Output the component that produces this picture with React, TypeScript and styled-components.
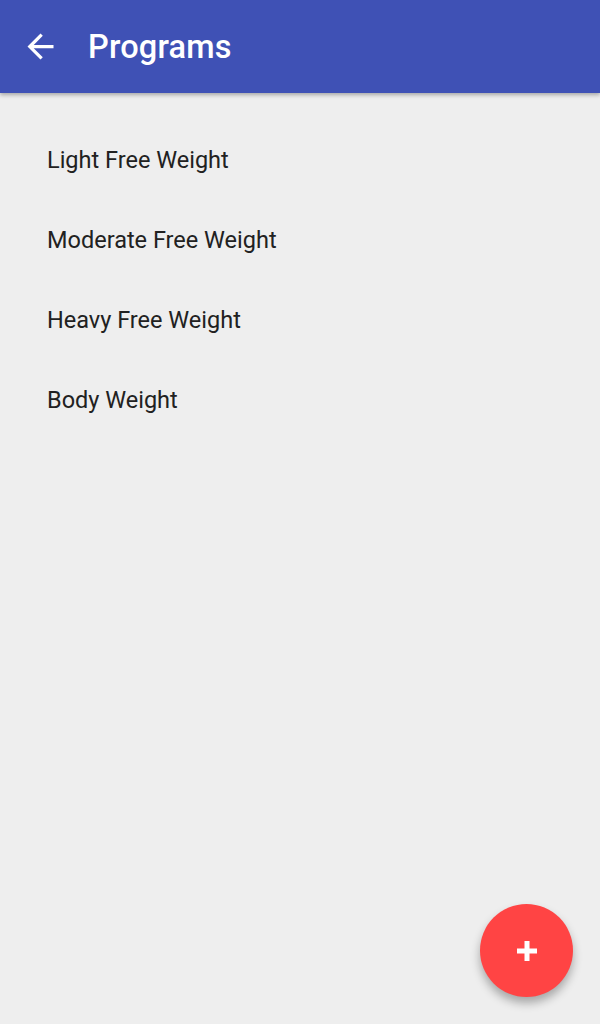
import React from "react";
import styled, { createGlobalStyle } from "styled-components";

const Global = createGlobalStyle`
  html, body { margin: 0; padding: 0; }
  body { background: #eeeeee; font-family: Roboto, "Noto Sans", sans-serif; }
`;

const Screen = styled.div`
  width: 600px;
  height: 1024px;
  background: #eeeeee;
  position: relative;
  overflow: hidden;
  display: flex;
  flex-direction: column;
`;

const AppBar = styled.header`
  height: 93px;
  background: #3f51b5;
  display: flex;
  align-items: center;
  padding-left: 20px;
  box-shadow: 0 2px 4px rgba(0, 0, 0, 0.3);
  position: relative;
  z-index: 1;
  flex-shrink: 0;
`;

const BackButton = styled.button`
  width: 40px;
  height: 40px;
  border: none;
  background: transparent;
  padding: 0;
  display: flex;
  align-items: center;
  justify-content: center;
  margin-right: 28px;
`;

const Title = styled.h1`
  margin: 0;
  color: #ffffff;
  font-family: Roboto, sans-serif;
  font-weight: 500;
  font-size: 32.5px;
  letter-spacing: 0.2px;
`;

const List = styled.ul`
  list-style: none;
  margin: 0;
  padding: 27px 0 0 0;
`;

const Item = styled.li`
  height: 80px;
  display: flex;
  align-items: center;
  padding-left: 47px;
  font-size: 23.5px;
  color: #212121;
  font-family: Roboto, sans-serif;
`;

const Fab = styled.button`
  position: absolute;
  right: 27px;
  bottom: 27px;
  width: 93px;
  height: 93px;
  border-radius: 50%;
  border: none;
  background: #ff4444;
  box-shadow: 0 6px 10px rgba(0, 0, 0, 0.3);
  display: flex;
  align-items: center;
  justify-content: center;
  padding: 0;
`;

const programs = ["Light Free Weight", "Moderate Free Weight", "Heavy Free Weight", "Body Weight"];

export default function App() {
  return (
    <Screen>
      <Global />
      <AppBar>
        <BackButton aria-label="Back">
          <svg width="39" height="39" viewBox="0 0 24 24">
            <path d="M20 11H7.83l5.59-5.59L12 4l-8 8 8 8 1.41-1.41L7.83 13H20v-2z" fill="#fff" />
          </svg>
        </BackButton>
        <Title>Programs</Title>
      </AppBar>
      <List>
        {programs.map((p) => (
          <Item key={p}>{p}</Item>
        ))}
      </List>
      <Fab aria-label="Add">
        <svg width="24" height="24" viewBox="0 0 24 24">
          <path d="M9.5 2h5v7.5H22v5h-7.5V22h-5v-7.5H2v-5h7.5z" fill="#fff" />
        </svg>
      </Fab>
    </Screen>
  );
}
